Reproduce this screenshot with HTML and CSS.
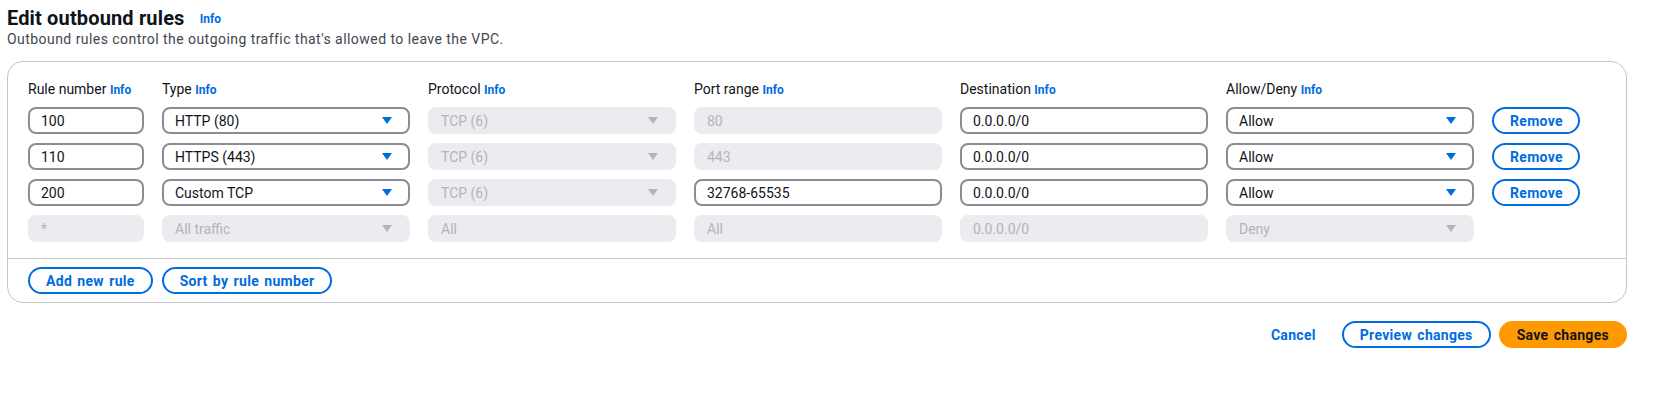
FILE: index.html
```html
<!DOCTYPE html>
<html lang="en">
<head>
  <meta charset="UTF-8">
  <meta name="viewport" content="width=device-width, initial-scale=1.0">
  <title>Edit outbound rules</title>

  <link rel="stylesheet" href="styles.css">
</head>
<body>
<div class="page">
  <div class="head">
    <h1>Edit outbound rules <a class="info" href="#">Info</a></h1>
    <p class="desc">Outbound rules control the outgoing traffic that's allowed to leave the VPC.</p>
  </div>

  <div class="panel">
    <div class="rules">
      <div class="label">Rule number <a class="info-sm" href="#">Info</a></div>
      <div class="label">Type <a class="info-sm" href="#">Info</a></div>
      <div class="label">Protocol <a class="info-sm" href="#">Info</a></div>
      <div class="label">Port range <a class="info-sm" href="#">Info</a></div>
      <div class="label">Destination <a class="info-sm" href="#">Info</a></div>
      <div class="label">Allow/Deny <a class="info-sm" href="#">Info</a></div>
      <div></div>

      <!-- rule 100 -->
      <div class="field">100</div>
      <div class="field select">HTTP (80) <svg class="caret" viewBox="0 0 10 7"><polygon points="0,0 10,0 5,7"/></svg></div>
      <div class="field select off">TCP (6) <svg class="caret" viewBox="0 0 10 7"><polygon points="0,0 10,0 5,7"/></svg></div>
      <div class="field off">80</div>
      <div class="field">0.0.0.0/0</div>
      <div class="field select">Allow <svg class="caret" viewBox="0 0 10 7"><polygon points="0,0 10,0 5,7"/></svg></div>
      <button class="btn">Remove</button>

      <!-- rule 110 -->
      <div class="field">110</div>
      <div class="field select">HTTPS (443) <svg class="caret" viewBox="0 0 10 7"><polygon points="0,0 10,0 5,7"/></svg></div>
      <div class="field select off">TCP (6) <svg class="caret" viewBox="0 0 10 7"><polygon points="0,0 10,0 5,7"/></svg></div>
      <div class="field off">443</div>
      <div class="field">0.0.0.0/0</div>
      <div class="field select">Allow <svg class="caret" viewBox="0 0 10 7"><polygon points="0,0 10,0 5,7"/></svg></div>
      <button class="btn">Remove</button>

      <!-- rule 200 -->
      <div class="field">200</div>
      <div class="field select">Custom TCP <svg class="caret" viewBox="0 0 10 7"><polygon points="0,0 10,0 5,7"/></svg></div>
      <div class="field select off">TCP (6) <svg class="caret" viewBox="0 0 10 7"><polygon points="0,0 10,0 5,7"/></svg></div>
      <div class="field">32768-65535</div>
      <div class="field">0.0.0.0/0</div>
      <div class="field select">Allow <svg class="caret" viewBox="0 0 10 7"><polygon points="0,0 10,0 5,7"/></svg></div>
      <button class="btn">Remove</button>

      <!-- default rule -->
      <div class="field off">*</div>
      <div class="field select off">All traffic <svg class="caret" viewBox="0 0 10 7"><polygon points="0,0 10,0 5,7"/></svg></div>
      <div class="field off">All</div>
      <div class="field off">All</div>
      <div class="field off">0.0.0.0/0</div>
      <div class="field select off">Deny <svg class="caret" viewBox="0 0 10 7"><polygon points="0,0 10,0 5,7"/></svg></div>
      <div></div>
    </div>

    <div class="panel-foot">
      <button class="btn">Add new rule</button>
      <button class="btn">Sort by rule number</button>
    </div>
  </div>

  <div class="actions">
    <button class="btn link">Cancel</button>
    <button class="btn">Preview changes</button>
    <button class="btn primary">Save changes</button>
  </div>
</div>
</body>
</html>
```

FILE: styles.css
```css
body {
  margin: 0;
  font-family: Roboto, "Liberation Sans", sans-serif;
  font-size: 14px;
  color: #0f141a;
  background: #fff;
}
.page {
  padding: 7px 31px 0 7px;
}
h1 {
  margin: 0;
  font-size: 20px;
  line-height: 23px;
  font-weight: 700;
  letter-spacing: 0.15px;
}
.info {
  margin-left: 10px;
  font-size: 12px;
  line-height: 1;
  font-weight: 700;
  letter-spacing: 0;
  color: #006ce0;
  text-decoration: none;
  vertical-align: 2px;
}
.desc {
  margin: 0;
  line-height: 18px;
  letter-spacing: 0.45px;
  color: #424650;
}
.panel {
  margin-top: 13px;
  border: 1px solid #c6c6cd;
  border-radius: 16px;
}
.rules {
  display: grid;
  grid-template-columns: 116px repeat(5, 248px) 88px;
  column-gap: 18px;
  row-gap: 9px;
  padding: 18px 20px 16px;
}
.label {
  line-height: 18px;
}
.info-sm {
  font-size: 12px;
  line-height: 1;
  font-weight: 700;
  color: #006ce0;
  text-decoration: none;
}
.field {
  box-sizing: border-box;
  height: 27px;
  display: flex;
  align-items: center;
  padding: 0 11px;
  border: 2px solid #8c8c94;
  border-radius: 8px;
  background: #fff;
  white-space: nowrap;
}
.select {
  justify-content: space-between;
  padding-right: 16px;
}
.caret {
  width: 10px;
  height: 7px;
  fill: #006ce0;
}
.off {
  background: #ebebf0;
  border-color: #ebebf0;
  color: #b4b4bb;
}
.off .caret {
  fill: #b4b4bb;
}
.btn {
  box-sizing: border-box;
  height: 27px;
  padding: 0 16px;
  border: 2px solid #006ce0;
  border-radius: 20px;
  background: #fff;
  color: #006ce0;
  font-family: inherit;
  font-size: 14px;
  font-weight: 700;
  letter-spacing: 0.3px;
  word-spacing: 1.5px;
  white-space: nowrap;
}
.panel-foot {
  display: flex;
  gap: 9px;
  padding: 8px 20px;
  border-top: 1px solid #c6c6cd;
}
.actions {
  display: flex;
  justify-content: flex-end;
  gap: 8px;
  margin-top: 18px;
}
.link {
  border-color: transparent;
}
.primary {
  background: #ff9900;
  border-color: #ff9900;
  color: #0f141a;
}
```
